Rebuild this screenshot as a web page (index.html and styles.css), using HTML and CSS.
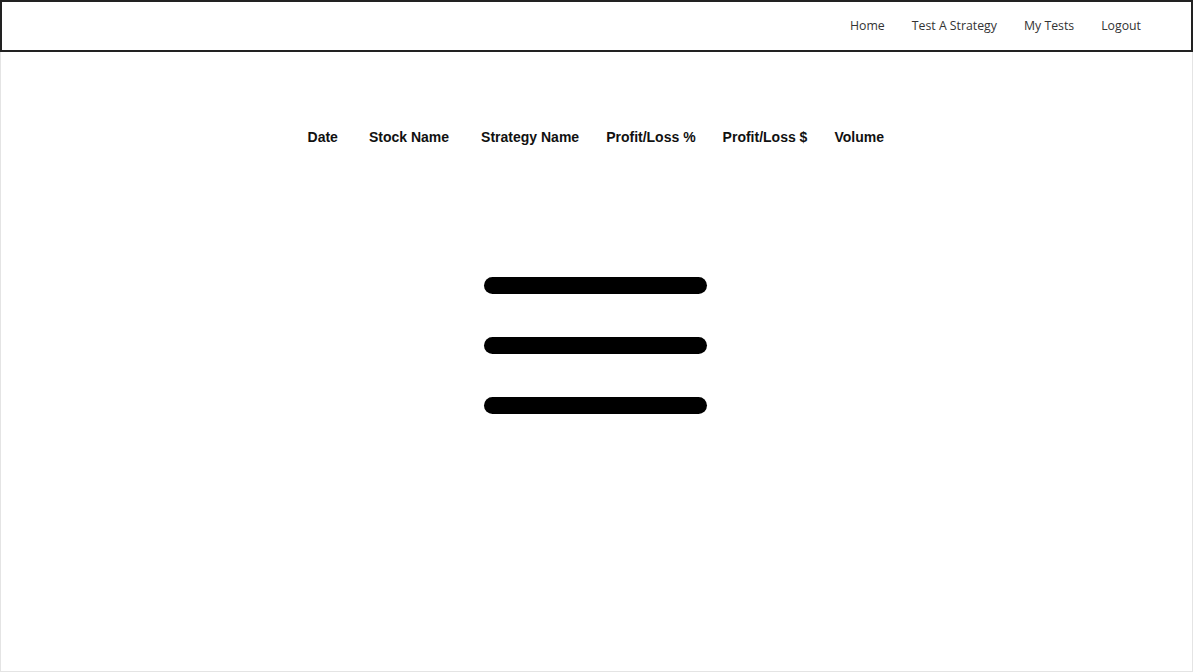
FILE: index.html
```html
<!DOCTYPE html>
<html>
<head>
<meta charset="utf-8">
<link rel="stylesheet" href="styles.css">
</head>
<body>
<div class="page">
  <header class="topbar">
    <nav class="nav">
      <a class="nav-link" href="#">Home</a>
      <a class="nav-link" href="#">Test A Strategy</a>
      <a class="nav-link" href="#">My Tests</a>
      <a class="nav-link" href="#">Logout</a>
    </nav>
  </header>
  <main class="content">
    <table class="results">
      <thead>
        <tr>
          <th class="col-date">Date</th>
          <th class="col-stock">Stock Name</th>
          <th>Strategy Name</th>
          <th>Profit/Loss %</th>
          <th>Profit/Loss $</th>
          <th>Volume</th>
        </tr>
      </thead>
    </table>
    <div class="loader">
      <span class="bar"></span>
      <span class="bar"></span>
      <span class="bar"></span>
    </div>
  </main>
</div>
</body>
</html>
```

FILE: styles.css
```css
html, body {
  margin: 0;
  padding: 0;
  background: #fff;
}
.page {
  box-sizing: border-box;
  width: 1193px;
  height: 672px;
  border: 1px solid #e4e4e4;
  border-top: none;
  display: flex;
  flex-direction: column;
}
.topbar {
  box-sizing: border-box;
  height: 52px;
  margin: 0 0 0 -1px;
  width: 1193px;
  border: 2px solid #222;
  display: flex;
  justify-content: flex-end;
  align-items: center;
  padding-right: 50px;
  padding-bottom: 2px;
}
.nav {
  display: flex;
  gap: 27px;
  align-items: center;
}
.nav-link {
  font-family: "Open Sans", sans-serif;
  font-size: 12.3px;
  color: #333;
  text-decoration: none;
}
.content {
  display: flex;
  flex-direction: column;
  align-items: center;
  padding-top: 75px;
  padding-right: 2px;
}
.results {
  border-collapse: collapse;
}
.results th {
  font-family: "Liberation Sans", Arial, sans-serif;
  font-weight: bold;
  font-size: 14px;
  color: #111;
  padding: 1px 13.5px;
  line-height: 18px;
}
.results th.col-date {
  padding-left: 14px;
  padding-right: 17.5px;
}
.results th.col-stock {
  padding-right: 18.5px;
}
.loader {
  margin-top: 130px;
  display: flex;
  flex-direction: column;
  gap: 43px;
}
.bar {
  display: block;
  width: 223px;
  height: 17px;
  border-radius: 9px;
  background: #000;
}
```
